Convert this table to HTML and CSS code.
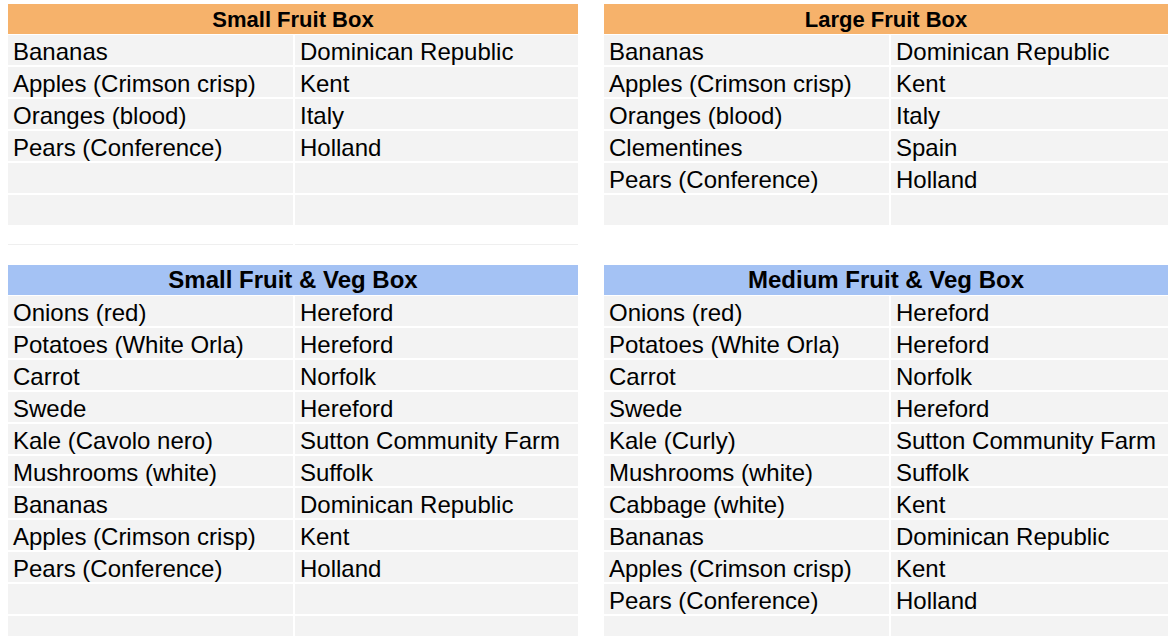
FILE: index.html
```html
<!DOCTYPE html>
<html>
<head>
<meta charset="utf-8">
<link rel="stylesheet" href="styles.css">
</head>
<body>
<div class="page">
  <section class="box">
    <div class="head orange small">Small Fruit Box</div>
    <div class="rows">
      <div class="cell">Bananas</div><div class="cell">Dominican Republic</div>
      <div class="cell">Apples (Crimson crisp)</div><div class="cell">Kent</div>
      <div class="cell">Oranges (blood)</div><div class="cell">Italy</div>
      <div class="cell">Pears (Conference)</div><div class="cell">Holland</div>
      <div class="cell"></div><div class="cell"></div>
      <div class="cell"></div><div class="cell"></div>
    </div>
    <div class="tail"><div class="line"></div><div class="line"></div></div>
  </section>
  <section class="box">
    <div class="head orange small">Large Fruit Box</div>
    <div class="rows">
      <div class="cell">Bananas</div><div class="cell">Dominican Republic</div>
      <div class="cell">Apples (Crimson crisp)</div><div class="cell">Kent</div>
      <div class="cell">Oranges (blood)</div><div class="cell">Italy</div>
      <div class="cell">Clementines</div><div class="cell">Spain</div>
      <div class="cell">Pears (Conference)</div><div class="cell">Holland</div>
      <div class="cell"></div><div class="cell"></div>
    </div>
  </section>
  <section class="box">
    <div class="head blue">Small Fruit &amp; Veg Box</div>
    <div class="rows">
      <div class="cell">Onions (red)</div><div class="cell">Hereford</div>
      <div class="cell">Potatoes (White Orla)</div><div class="cell">Hereford</div>
      <div class="cell">Carrot</div><div class="cell">Norfolk</div>
      <div class="cell">Swede</div><div class="cell">Hereford</div>
      <div class="cell">Kale (Cavolo nero)</div><div class="cell">Sutton Community Farm</div>
      <div class="cell">Mushrooms (white)</div><div class="cell">Suffolk</div>
      <div class="cell">Bananas</div><div class="cell">Dominican Republic</div>
      <div class="cell">Apples (Crimson crisp)</div><div class="cell">Kent</div>
      <div class="cell">Pears (Conference)</div><div class="cell">Holland</div>
      <div class="cell"></div><div class="cell"></div>
      <div class="cell"></div><div class="cell"></div>
    </div>
  </section>
  <section class="box">
    <div class="head blue">Medium Fruit &amp; Veg Box</div>
    <div class="rows">
      <div class="cell">Onions (red)</div><div class="cell">Hereford</div>
      <div class="cell">Potatoes (White Orla)</div><div class="cell">Hereford</div>
      <div class="cell">Carrot</div><div class="cell">Norfolk</div>
      <div class="cell">Swede</div><div class="cell">Hereford</div>
      <div class="cell">Kale (Curly)</div><div class="cell">Sutton Community Farm</div>
      <div class="cell">Mushrooms (white)</div><div class="cell">Suffolk</div>
      <div class="cell">Cabbage (white)</div><div class="cell">Kent</div>
      <div class="cell">Bananas</div><div class="cell">Dominican Republic</div>
      <div class="cell">Apples (Crimson crisp)</div><div class="cell">Kent</div>
      <div class="cell">Pears (Conference)</div><div class="cell">Holland</div>
      <div class="cell"></div><div class="cell"></div>
    </div>
  </section>
</div>
</body>
</html>
```

FILE: styles.css
```css
html, body {
  margin: 0;
  padding: 0;
  background: #ffffff;
  overflow: hidden;
}
body {
  font-family: "Liberation Sans", Arial, sans-serif;
  color: #000000;
}
.page {
  display: grid;
  grid-template-columns: 570px 564px;
  column-gap: 26px;
  row-gap: 20px;
  align-items: start;
  padding: 4px 0 0 8px;
}
.head {
  height: 30px;
  line-height: 30px;
  text-align: center;
  font-weight: bold;
  font-size: 24px;
  margin-bottom: 1px;
  white-space: nowrap;
}
.head.small {
  font-size: 22px;
  line-height: 31px;
}
.orange { background: #f6b26b; }
.blue { background: #a4c2f4; }
.rows {
  display: grid;
  grid-template-columns: 285px 1fr;
  gap: 2px;
}
.cell {
  height: 30px;
  line-height: 34px;
  font-size: 24px;
  padding-left: 5px;
  background: #f3f3f3;
  white-space: nowrap;
  overflow: visible;
}
.tail {
  display: grid;
  grid-template-columns: 285px 1fr;
  column-gap: 2px;
  padding-top: 19px;
}
.line {
  height: 1px;
  background: #efefef;
}
```
